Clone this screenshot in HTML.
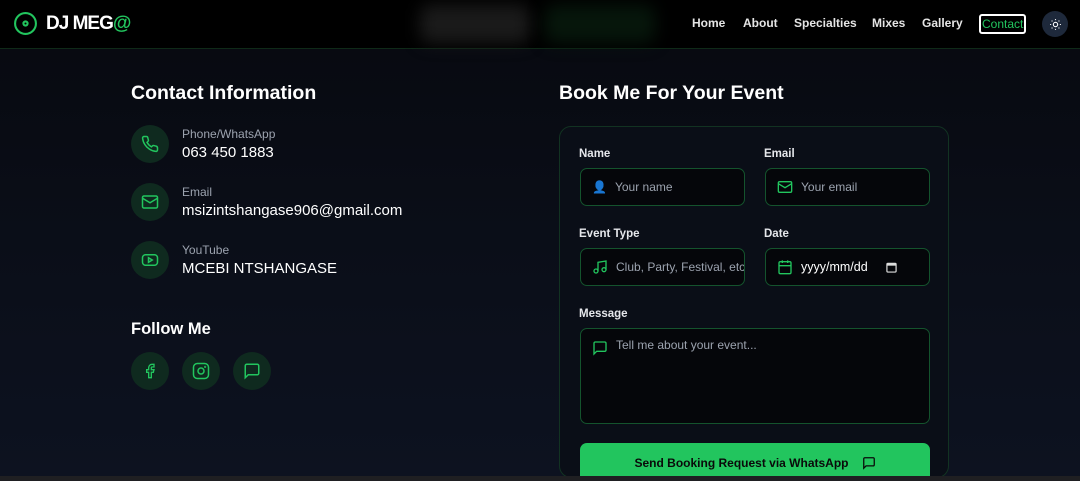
<!DOCTYPE html>
<html style="width:1080px;height:481px;overflow:hidden"><head><meta charset="utf-8"><style>
*{box-sizing:border-box;margin:0;padding:0}
body{width:1080px;height:481px;overflow:hidden;font-family:"Liberation Sans",sans-serif;background:linear-gradient(180deg,#07090f 0%,#0b0f1a 60%,#0d1220 100%);color:#fff;position:relative}
.hdr{position:absolute;left:0;top:0;width:1080px;height:49px;background:#000;border-bottom:1px solid #0f2a18}
.blur1{position:absolute;left:420px;top:5px;width:110px;height:38px;background:#1a1a1a;filter:blur(8px);border-radius:10px}
.blur2{position:absolute;left:545px;top:5px;width:110px;height:38px;background:#06160b;filter:blur(8px);border-radius:10px}
.logo{position:absolute;left:13px;top:11px;display:flex;align-items:center}
.logo span{font-weight:700;font-size:19px;margin-left:8px;letter-spacing:-1px}
.nav{position:absolute;top:16px;font-size:12px;font-weight:700;color:#e5e5e5}
.abs{position:absolute}
.circ{position:absolute;width:38px;height:38px;border-radius:50%;background:#0f2a1f;display:flex;align-items:center;justify-content:center}
.lbl{position:absolute;font-size:12px;color:#9ca3af}
.val{position:absolute;font-size:15px;color:#fff}
.card{position:absolute;left:559px;top:126px;width:390px;height:352px;border:1px solid #123322;border-radius:12px;background:#0a0e17}
.fl{position:absolute;font-size:11.5px;font-weight:700;color:#e5e7eb}
.inp{position:absolute;border:1px solid #14532d;border-radius:7px;background:#05060a;height:38px;width:165px;display:flex;align-items:center;padding-left:11px;font-size:12px;color:#9ca3af}
.inp svg{margin-right:8px}
</style></head><body>
<div class="hdr">
<div class="blur1"></div><div class="blur2"></div>
<div class="logo"><svg width="25" height="25" viewBox="0 0 24 24" fill="none" stroke="#22c55e" stroke-width="2"><circle cx="12" cy="12" r="10"/><circle cx="12" cy="12" r="2"/></svg><span>DJ MEG<span style="color:#22c55e;margin:0;letter-spacing:0;font-weight:700">@</span></span></div>
<div class="nav" style="left:692px">Home</div>
<div class="nav" style="left:743px">About</div>
<div class="nav" style="left:794px">Specialties</div>
<div class="nav" style="left:872px">Mixes</div>
<div class="nav" style="left:922px">Gallery</div>
<div class="nav" style="left:979px;top:14px;border:2px solid #fff;border-radius:3px;padding:1px 1px;color:#22c55e;font-weight:400">Contact</div>
<div class="abs" style="left:1042px;top:11px;width:26px;height:26px;border-radius:50%;background:#1e293b;display:flex;align-items:center;justify-content:center"><svg width="13" height="13" viewBox="0 0 24 24" fill="none" stroke="#fff" stroke-width="2"><circle cx="12" cy="12" r="4"/><path d="M12 2v2M12 20v2M4.9 4.9l1.4 1.4M17.7 17.7l1.4 1.4M2 12h2M20 12h2M4.9 19.1l1.4-1.4M17.7 6.3l1.4-1.4"/></svg></div>
</div>

<div class="abs" style="left:131px;top:82px;font-size:19.5px;font-weight:700">Contact Information</div>
<div class="circ" style="left:131px;top:125px"><svg width="18" height="18" viewBox="0 0 24 24" fill="none" stroke="#22c55e" stroke-width="2"><path d="M22 16.9v3a2 2 0 0 1-2.2 2 19.8 19.8 0 0 1-8.6-3.1 19.5 19.5 0 0 1-6-6A19.8 19.8 0 0 1 2.1 4.2 2 2 0 0 1 4.1 2h3a2 2 0 0 1 2 1.7c.1.9.4 1.8.7 2.7a2 2 0 0 1-.5 2.1L8 9.8a16 16 0 0 0 6 6l1.3-1.3a2 2 0 0 1 2.1-.4c.9.3 1.8.6 2.7.7a2 2 0 0 1 1.7 2z"/></svg></div>
<div class="lbl" style="left:182px;top:127px">Phone/WhatsApp</div>
<div class="val" style="left:182px;top:144px">063 450 1883</div>
<div class="circ" style="left:131px;top:183px"><svg width="18" height="18" viewBox="0 0 24 24" fill="none" stroke="#22c55e" stroke-width="2"><rect x="2" y="4" width="20" height="16" rx="2"/><path d="M22 7l-10 6L2 7"/></svg></div>
<div class="lbl" style="left:182px;top:185px">Email</div>
<div class="val" style="left:182px;top:202px">msizintshangase906@gmail.com</div>
<div class="circ" style="left:131px;top:241px"><svg width="18" height="18" viewBox="0 0 24 24" fill="none" stroke="#22c55e" stroke-width="2"><rect x="2" y="5" width="20" height="14" rx="4"/><path d="M10 9l5 3-5 3z"/></svg></div>
<div class="lbl" style="left:182px;top:243px">YouTube</div>
<div class="val" style="left:182px;top:260px">MCEBI NTSHANGASE</div>

<div class="abs" style="left:131px;top:320px;font-size:16.5px;font-weight:700">Follow Me</div>
<div class="circ" style="left:131px;top:352px"><svg width="16" height="16" viewBox="0 0 24 24" fill="none" stroke="#22c55e" stroke-width="2"><path d="M18 2h-3a5 5 0 0 0-5 5v3H7v4h3v8h4v-8h3l1-4h-4V7a1 1 0 0 1 1-1h3z"/></svg></div>
<div class="circ" style="left:182px;top:352px"><svg width="18" height="18" viewBox="0 0 24 24" fill="none" stroke="#22c55e" stroke-width="2"><rect x="2" y="2" width="20" height="20" rx="5"/><circle cx="12" cy="12" r="4"/><circle cx="17.5" cy="6.5" r=".5"/></svg></div>
<div class="circ" style="left:233px;top:352px"><svg width="18" height="18" viewBox="0 0 24 24" fill="none" stroke="#22c55e" stroke-width="2"><path d="M21 15a2 2 0 0 1-2 2H7l-4 4V5a2 2 0 0 1 2-2h14a2 2 0 0 1 2 2z"/></svg></div>

<div class="abs" style="left:559px;top:82px;font-size:19.5px;font-weight:700">Book Me For Your Event</div>
<div class="card"></div>
<div class="fl" style="left:579px;top:148px">Name</div>
<div class="fl" style="left:764px;top:148px">Email</div>
<div class="inp" style="left:580px;top:168px"><span style="color:#7e3fa0;font-size:12px;margin-right:8px">👤</span>Your name</div>
<div class="inp" style="left:765px;top:168px"><svg width="16" height="16" viewBox="0 0 24 24" fill="none" stroke="#22c55e" stroke-width="2"><rect x="2" y="4" width="20" height="16" rx="2"/><path d="M22 7l-10 6L2 7"/></svg>Your email</div>
<div class="fl" style="left:579px;top:228px">Event Type</div>
<div class="fl" style="left:764px;top:228px">Date</div>
<div class="inp" style="left:580px;top:248px;overflow:hidden;white-space:nowrap"><svg width="16" height="16" viewBox="0 0 24 24" fill="none" stroke="#22c55e" stroke-width="2" style="flex:none"><path d="M9 18V5l12-2v13"/><circle cx="6" cy="18" r="3"/><circle cx="18" cy="16" r="3"/></svg>Club, Party, Festival, etc</div>
<div class="inp" style="left:765px;top:248px;color:#fff;font-size:12.5px"><svg width="16" height="16" viewBox="0 0 24 24" fill="none" stroke="#22c55e" stroke-width="2"><rect x="3" y="4" width="18" height="18" rx="2"/><path d="M16 2v4M8 2v4M3 10h18"/></svg>yyyy/mm/dd<svg style="margin-left:18px" width="11" height="11" viewBox="0 0 12 12"><rect x="1" y="1.5" width="10" height="9.5" rx="1" fill="none" stroke="#ddd" stroke-width="1.3"/><rect x="1" y="1.5" width="10" height="2.5" fill="#ddd"/></svg></div>
<div class="fl" style="left:579px;top:308px">Message</div>
<div class="inp" style="left:580px;top:328px;width:350px;height:96px;align-items:flex-start;padding-top:9px"><svg width="16" height="16" viewBox="0 0 24 24" fill="none" stroke="#22c55e" stroke-width="2" style="margin-top:2px"><path d="M21 15a2 2 0 0 1-2 2H7l-4 4V5a2 2 0 0 1 2-2h14a2 2 0 0 1 2 2z"/></svg>Tell me about your event...</div>
<div class="abs" style="left:580px;top:443px;width:350px;height:40px;background:#22c55e;border-radius:7px;display:flex;align-items:center;justify-content:center;color:#0a0a0a;font-weight:700;font-size:12px">Send Booking Request via WhatsApp<svg style="margin-left:13px" width="14" height="14" viewBox="0 0 24 24" fill="none" stroke="#0a0a0a" stroke-width="2.2"><path d="M21 15a2 2 0 0 1-2 2H7l-4 4V5a2 2 0 0 1 2-2h14a2 2 0 0 1 2 2z"/></svg></div>
<div class="abs" style="left:0;top:476px;width:1080px;height:5px;background:#1f1f22;z-index:5"></div>
</body></html>
